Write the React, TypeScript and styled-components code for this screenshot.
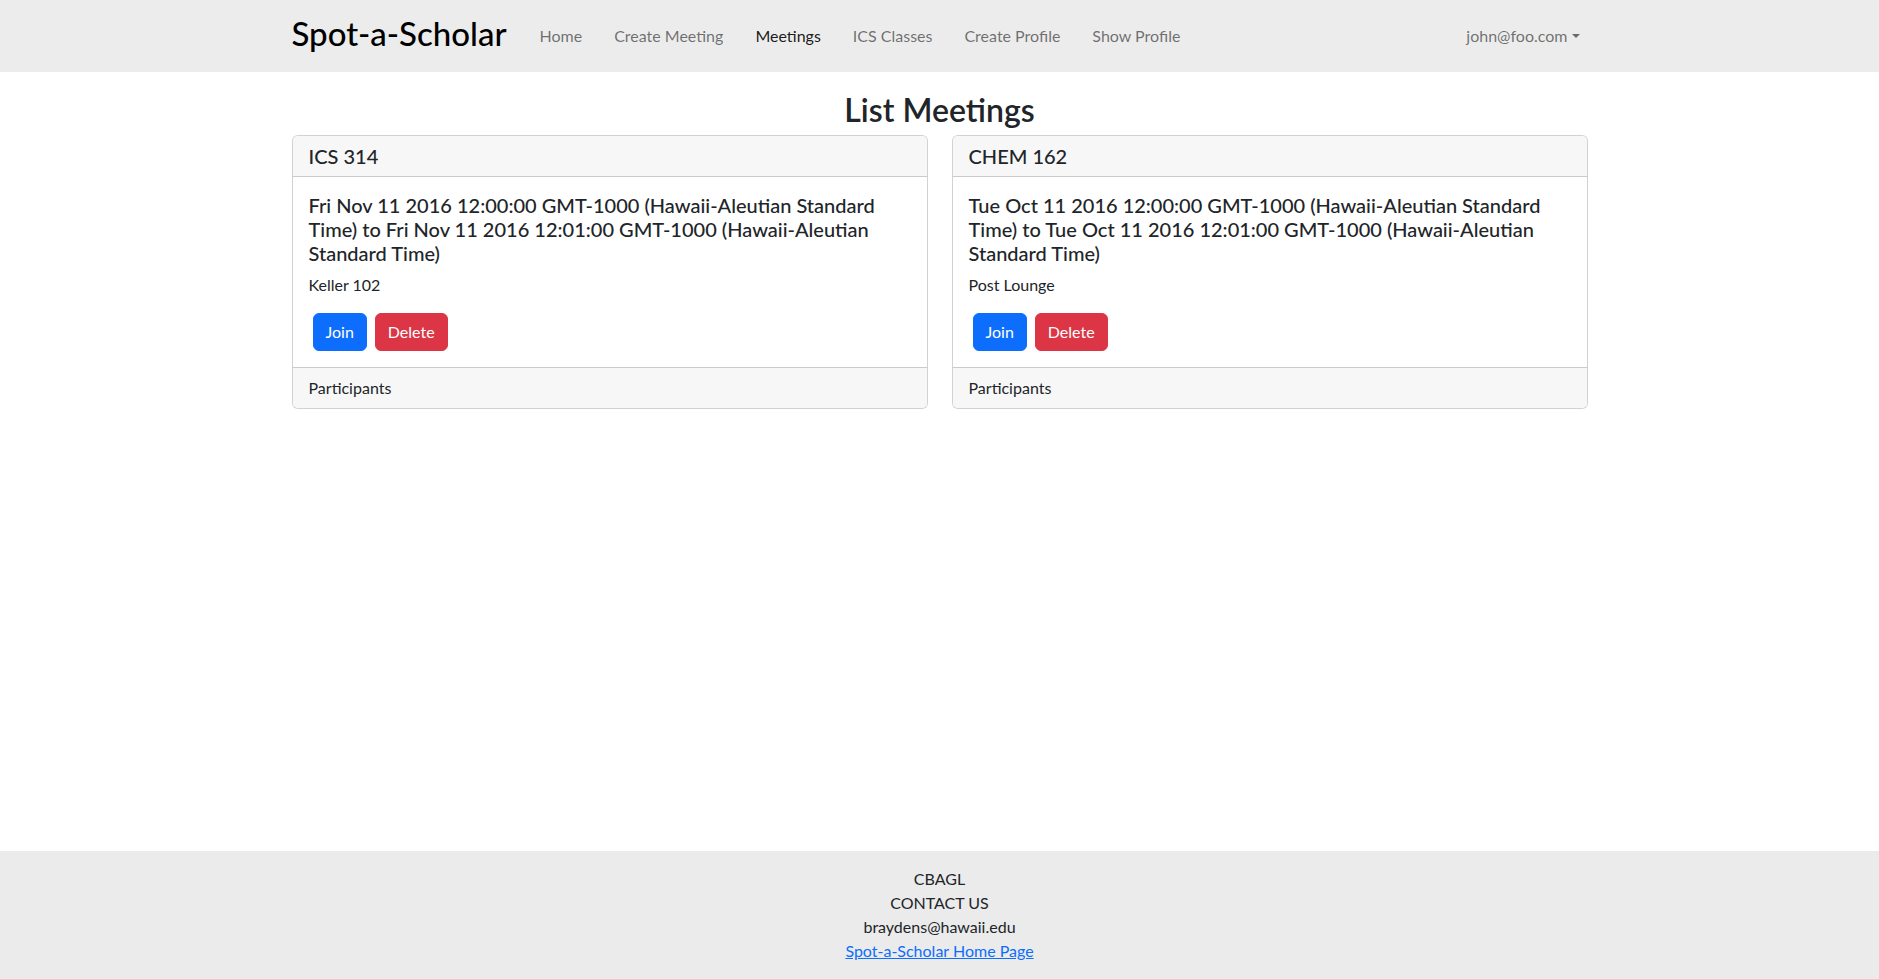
import React from "react";
import styled, { createGlobalStyle } from "styled-components";

const GlobalStyle = createGlobalStyle`
  * { box-sizing: border-box; }
  html, body { margin: 0; padding: 0; }
  body {
    font-family: Lato, "Open Sans", "Liberation Sans", sans-serif;
    font-size: 16px;
    line-height: 1.5;
    color: #212529;
    background: #ffffff;
  }
`;

const Page = styled.div`
  min-height: 100vh;
  display: flex;
  flex-direction: column;
`;

const NavBar = styled.nav`
  height: 72px;
  background: #ececec;
  display: flex;
  justify-content: center;
`;

const NavInner = styled.div`
  width: 1320px;
  padding: 0 12px;
  display: flex;
  align-items: center;
`;

const Brand = styled.a`
  font-size: 33px;
  font-weight: 500;
  line-height: 1.2;
  color: #000;
  text-decoration: none;
  margin-right: 17px;
  margin-top: -4px;
`;

const NavList = styled.div`
  display: flex;
  align-items: center;
`;

const NavLink = styled.a<{ $active?: boolean }>`
  padding: 8px 16px;
  font-size: 16px;
  line-height: 24px;
  color: ${(p) => (p.$active ? "rgba(0,0,0,0.9)" : "rgba(0,0,0,0.55)")};
  text-decoration: none;
`;

const UserMenu = styled.a`
  margin-left: auto;
  padding: 8px;
  font-size: 16px;
  line-height: 24px;
  color: rgba(0, 0, 0, 0.55);
  text-decoration: none;
  display: flex;
  align-items: center;
  &::after {
    content: "";
    display: inline-block;
    margin-left: 4px;
    border-top: 4.8px solid;
    border-right: 4.8px solid transparent;
    border-left: 4.8px solid transparent;
    border-bottom: 0;
  }
`;

const Main = styled.main`
  flex: 1;
  display: flex;
  justify-content: center;
`;

const Container = styled.div`
  width: 1320px;
  padding: 19px 12px 0;
`;

const Title = styled.h2`
  margin: 0 0 6px;
  font-size: 32px;
  font-weight: 600;
  line-height: 1.2;
  text-align: center;
`;

const CardGrid = styled.div`
  display: grid;
  grid-template-columns: 1fr 1fr;
  gap: 24px;
`;

const Card = styled.div`
  border: 1px solid rgba(0, 0, 0, 0.175);
  border-radius: 6px;
  overflow: hidden;
  background: #fff;
`;

const CardHeader = styled.div`
  padding: 8px 16px;
  background: #f7f7f7;
  border-bottom: 1px solid rgba(0, 0, 0, 0.175);
  font-size: 20px;
  line-height: 24px;
  font-weight: 500;
`;

const CardBody = styled.div`
  padding: 16px;
`;

const DateTitle = styled.h5`
  margin: 0 0 8px;
  font-size: 20px;
  font-weight: 500;
  line-height: 1.2;
`;

const Location = styled.p`
  margin: 0 0 16px;
`;

const ButtonRow = styled.div`
  display: flex;
`;

const Button = styled.button<{ $variant: "primary" | "danger" }>`
  margin: 0 4px;
  padding: 6px 12px;
  font-family: inherit;
  font-size: 16px;
  line-height: 24px;
  color: #fff;
  border-radius: 6px;
  border: 1px solid ${(p) => (p.$variant === "primary" ? "#0d6efd" : "#dc3545")};
  background: ${(p) => (p.$variant === "primary" ? "#0d6efd" : "#dc3545")};
  cursor: pointer;
`;

const CardFooter = styled.div`
  padding: 8px 16px;
  background: #f7f7f7;
  border-top: 1px solid rgba(0, 0, 0, 0.175);
`;

const Footer = styled.footer`
  background: #ebebeb;
  padding: 16px 0;
  text-align: center;
  line-height: 24px;
`;

const FooterLine = styled.div``;

const FooterLink = styled.a`
  color: #0d6efd;
  text-decoration: underline;
`;

const meetings = [
  {
    course: "ICS 314",
    time:
      "Fri Nov 11 2016 12:00:00 GMT-1000 (Hawaii-Aleutian Standard Time) to Fri Nov 11 2016 12:01:00 GMT-1000 (Hawaii-Aleutian Standard Time)",
    location: "Keller 102",
  },
  {
    course: "CHEM 162",
    time:
      "Tue Oct 11 2016 12:00:00 GMT-1000 (Hawaii-Aleutian Standard Time) to Tue Oct 11 2016 12:01:00 GMT-1000 (Hawaii-Aleutian Standard Time)",
    location: "Post Lounge",
  },
];

const links = ["Home", "Create Meeting", "Meetings", "ICS Classes", "Create Profile", "Show Profile"];

export default function App() {
  return (
    <Page>
      <GlobalStyle />
      <NavBar>
        <NavInner>
          <Brand href="#">Spot-a-Scholar</Brand>
          <NavList>
            {links.map((l) => (
              <NavLink key={l} href="#" $active={l === "Meetings"}>
                {l}
              </NavLink>
            ))}
          </NavList>
          <UserMenu href="#">john@foo.com</UserMenu>
        </NavInner>
      </NavBar>
      <Main>
        <Container>
          <Title>List Meetings</Title>
          <CardGrid>
            {meetings.map((m) => (
              <Card key={m.course}>
                <CardHeader>{m.course}</CardHeader>
                <CardBody>
                  <DateTitle>{m.time}</DateTitle>
                  <Location>{m.location}</Location>
                  <ButtonRow>
                    <Button $variant="primary">Join</Button>
                    <Button $variant="danger">Delete</Button>
                  </ButtonRow>
                </CardBody>
                <CardFooter>Participants</CardFooter>
              </Card>
            ))}
          </CardGrid>
        </Container>
      </Main>
      <Footer>
        <FooterLine>CBAGL</FooterLine>
        <FooterLine>CONTACT US</FooterLine>
        <FooterLine>braydens@hawaii.edu</FooterLine>
        <FooterLine>
          <FooterLink href="#">Spot-a-Scholar Home Page</FooterLink>
        </FooterLine>
      </Footer>
    </Page>
  );
}
